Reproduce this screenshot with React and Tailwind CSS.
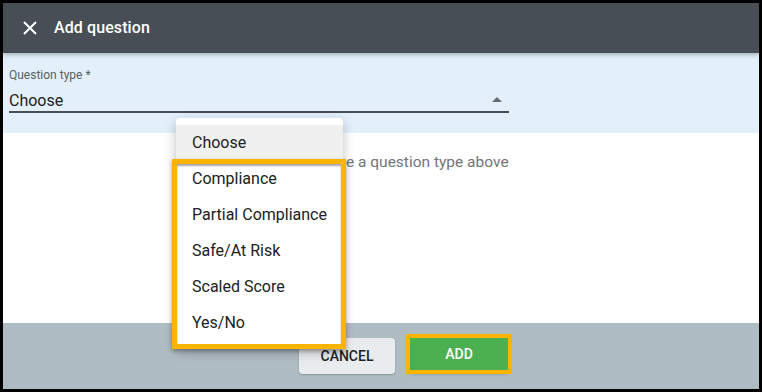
export default function App() {
  const options = ['Compliance', 'Partial Compliance', 'Safe/At Risk', 'Scaled Score', 'Yes/No'];

  return (
    <div className="w-[762px] h-[392px] bg-black p-[3px] font-['Roboto',sans-serif]">
      <div className="relative w-full h-full flex flex-col bg-white overflow-hidden">
        {/* header */}
        <div className="h-[50px] shrink-0 bg-[#474e55] flex items-center pl-[20px] shadow-[0_2px_4px_rgba(0,0,0,0.25)] z-10">
          <svg width="14" height="14" viewBox="0 0 14 14" className="text-white">
            <path d="M1 1L13 13M13 1L1 13" stroke="currentColor" strokeWidth="2" />
          </svg>
          <span className="ml-[17px] text-white text-[16px] font-medium tracking-[0.1px]">Add question</span>
        </div>

        {/* question type field */}
        <div className="h-[80px] shrink-0 bg-[#e3f0fb] px-[6px] pt-[15px]">
          <div className="w-[500px]">
            <div className="text-[12px] leading-[14px] text-[#5a5f64]">Question type *</div>
            <div className="flex items-center justify-between h-[28px] border-b-2 border-[#474e55] mt-[3px]">
              <span className="text-[16px] text-[#212121] pt-[5px]">Choose</span>
              <svg width="10" height="5" viewBox="0 0 10 5" className="mr-[7px] mt-[2px]">
                <path d="M0 5L5 0L10 5Z" fill="#646a70" />
              </svg>
            </div>
          </div>
        </div>

        {/* body */}
        <div className="flex-1 bg-white pt-[18px] text-center text-[15.5px] text-[#757575]">
          Please choose a question type above
        </div>

        {/* footer */}
        <div className="h-[66px] shrink-0 bg-[#afbcc3] flex items-center pl-[296px] gap-[15px]">
          <button className="w-[96px] h-[36px] rounded-[4px] bg-[#e9ecef] text-[14px] font-medium text-[#222] shadow-[0_1px_2px_rgba(0,0,0,0.2)]">
            CANCEL
          </button>
          <button className="w-[98px] h-[32px] bg-[#4caf50] text-white text-[14px] font-medium outline-[4px] outline-solid outline-[#fbb400] shadow-[0_3px_4px_rgba(0,0,0,0.35)] -mt-[4px]">
            ADD
          </button>
        </div>

        {/* dropdown menu */}
        <div className="absolute left-[173px] top-[115px] w-[167px] bg-white rounded-[4px] py-[7px] shadow-[0_4px_12px_rgba(0,0,0,0.25)] z-20">
          <div className="h-[36px] flex items-center px-[16px] bg-[#f0f0f0] text-[16px] text-[#212121]">Choose</div>
          {options.map((o) => (
            <div key={o} className="h-[36px] flex items-center px-[16px] text-[16px] text-[#212121]">
              {o}
            </div>
          ))}
        </div>

        {/* highlight box */}
        <div className="absolute left-[169px] top-[156px] w-[174px] h-[190px] border-[5px] border-[#fbb400] shadow-[inset_0_2px_2px_rgba(0,0,0,0.35),0_2px_4px_rgba(0,0,0,0.3)] z-30 pointer-events-none" />
      </div>
    </div>
  );
}
